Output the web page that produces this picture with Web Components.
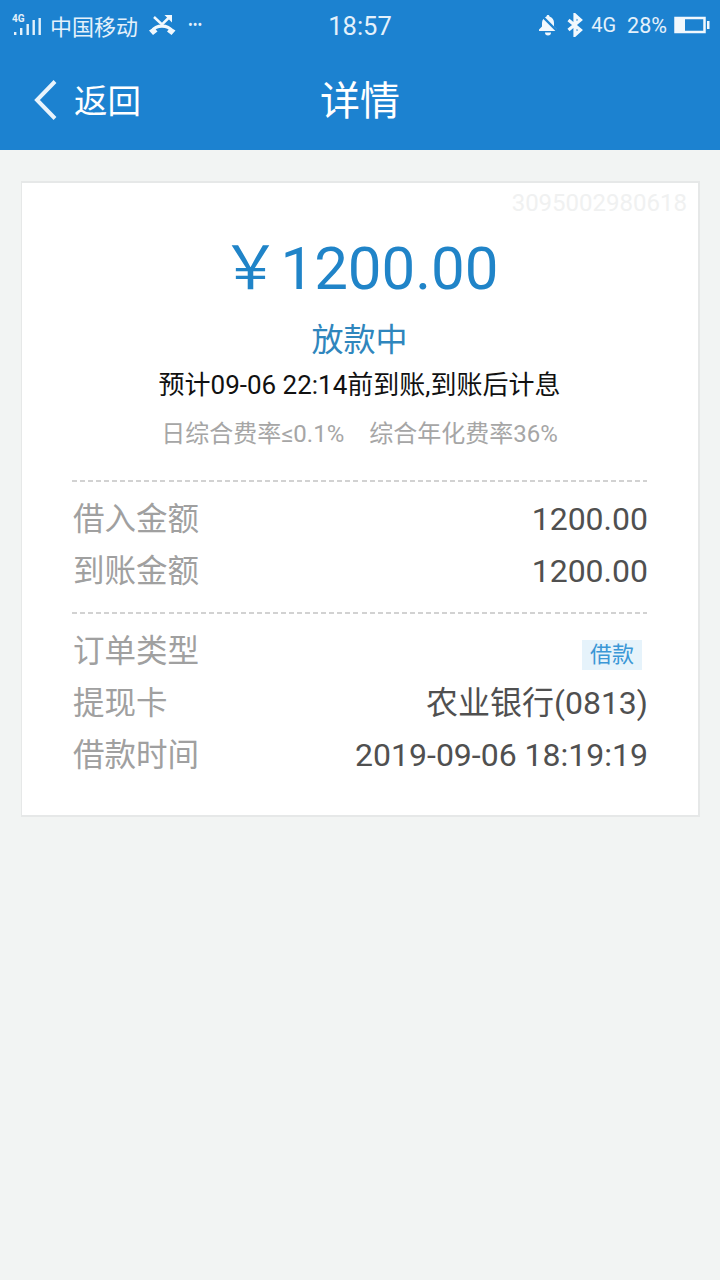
<!DOCTYPE html>
<html lang="zh">
<head>
<meta charset="utf-8">
<title>详情</title>
<style>
  html, body { margin: 0; height: 100%; background: #f2f4f3; }
  body { font-family: Roboto, "Noto Sans CJK SC", sans-serif; }
</style>
</head>
<body>
<app-header title="详情" back="返回"></app-header>
<detail-card serial="3095002980618">
  <amount-head slot="head" amount="1200.00" status="放款中"
    note="预计09-06 22:14前到账,到账后计息"
    fee-a="日综合费率≤0.1%" fee-b="综合年化费率36%"></amount-head>
  <info-row label="借入金额">1200.00</info-row>
  <info-row label="到账金额">1200.00</info-row>
  <dash-line></dash-line>
  <info-row label="订单类型" tag>借款</info-row>
  <info-row label="提现卡" cjk>农业银行(0813)</info-row>
  <info-row label="借款时间">2019-09-06 18:19:19</info-row>
</detail-card>

<script>
customElements.define("app-header", class extends HTMLElement {
  connectedCallback() {
    this.attachShadow({ mode: "open" }).innerHTML = `
      <style>
        :host { display: block; height: 150px; background: #1c82d0; color: #fff; }
        .status { height: 50px; display: flex; align-items: center; padding: 0 10px 0 12px;
          box-sizing: border-box; font-size: 22px; color: #e4f1fb; }
        .left, .right { display: flex; align-items: center; }
        .left { flex: 1; }
        .right { flex: 1; justify-content: flex-end; }
        .carrier { margin-left: 8px; }
        .call { margin-left: 10px; }
        .dots { margin-left: 12px; font-size: 14px; }
        .time { font-size: 25.500px; width: 120px; text-align: center; margin-left: -2px; margin-top: 2px; }
        .bell { margin-right: 9px; margin-left: -1px; }
        .net { margin-left: 8px; font-size: 20px; }
        .pct { margin-left: 11px; font-size: 21.500px; }
        .batt { margin-left: 7px; }
        nav { height: 100px; display: flex; align-items: center; position: relative; }
        .back { display: flex; align-items: center; padding-left: 33px; font-size: 33.500px; margin-top: -3px; }
        .back svg { margin: 3px 14px 0 0; }
        h1 { position: absolute; left: 0; right: 0; top: 2px; margin: 0; line-height: 100px;
          text-align: center; font-size: 40px; font-weight: 400; pointer-events: none; }
      </style>
      <div class="status">
        <div class="left">
          <svg width="30" height="22" viewBox="0 0 30 22" fill="#e4f1fb">
            <text x="0" y="8" font-size="10" font-weight="700" font-family="Roboto, sans-serif">4G</text>
            <rect x="2" y="18" width="2.400" height="3"/><rect x="8" y="14" width="2.400" height="7"/>
            <rect x="14.500" y="10" width="2.400" height="11"/><rect x="20.500" y="6" width="2.400" height="15"/>
            <rect x="26.500" y="4" width="2.400" height="17"/>
          </svg>
          <span class="carrier">中国移动</span>
          <svg class="call" width="28" height="22" viewBox="0 0 28 22" fill="none" stroke="#f1f8fd">
            <path d="M4 17C8 10.500 20 10.500 24 17" stroke-width="3.200"/>
            <path d="M1 16.500l5-3 3.500 4-4.500 3.500zM27.500 16.500l-5-3-3.500 4 4.500 3.500z" fill="#f1f8fd" stroke="none"/>
            <path d="M6 3l8 7.500 6.500-6.500" stroke-width="2.500"/>
            <path d="M16.500 1h7.500v7.500z" fill="#f1f8fd" stroke="none"/>
          </svg>
          <span class="dots">•••</span>
        </div>
        <span class="time">18:57</span>
        <div class="right">
          <svg class="bell" width="20" height="22" viewBox="0 0 20 22" fill="#f1f8fd">
            <path d="M10 1c1 0 1.500.7 1.500 1.500 3 .8 4.500 3.500 4.500 6.500v3.500l3 3v1.500H1V15.500l3-3V9c0-3 2-5.700 4.500-6.500C8.500 1.700 9 1 10 1z"/>
            <path d="M7 18.500h6a3 3 0 0 1-6 0z"/>
            <path d="M3 1l16 16" stroke="#1c82d0" stroke-width="2.400"/>
          </svg>
          <svg width="16" height="24" viewBox="0 0 16 24" fill="none" stroke="#f1f8fd" stroke-width="3.200">
            <path d="M1.500 7l12 10-5.500 5V2l5.500 5-12 10"/>
          </svg>
          <span class="net">4G</span>
          <span class="pct">28%</span>
          <svg class="batt" width="36" height="18" viewBox="0 0 36 18">
            <rect x="1.500" y="2" width="29" height="14" fill="none" stroke="#f1f8fd" stroke-width="2.500"/>
            <rect x="1" y="1.500" width="10" height="15" fill="#f1f8fd"/>
            <rect x="33" y="5" width="2.500" height="8" fill="#f1f8fd"/>
          </svg>
        </div>
      </div>
      <nav>
        <div class="back">
          <svg width="27" height="42" viewBox="0 0 27 42" fill="none" stroke="#e9f4fc" stroke-width="4">
            <path d="M22 2.500L4 21l18 18.500"/>
          </svg>
          <span>${this.getAttribute("back")}</span>
        </div>
        <h1>${this.getAttribute("title")}</h1>
      </nav>`;
  }
});

customElements.define("detail-card", class extends HTMLElement {
  connectedCallback() {
    this.attachShadow({ mode: "open" }).innerHTML = `
      <style>
        :host { display: block; box-sizing: border-box; width: 679px; height: 636px; margin: 31px 0 0 21px;
          background: #fff; border: 1px solid #e6e8e8; border-width: 2px 2px 2px 1px; position: relative; }
        .serial { position: absolute; top: 6px; right: 11px; font-size: 24px; line-height: 28px; color: #f0f1f1; }
        .body { padding: 8px 51px 0 50px; }
      </style>
      <div class="serial">${this.getAttribute("serial")}</div>
      <slot name="head"></slot>
      <div class="body"><slot></slot></div>`;
  }
});

customElements.define("amount-head", class extends HTMLElement {
  connectedCallback() {
    const a = n => this.getAttribute(n);
    this.attachShadow({ mode: "open" }).innerHTML = `
      <style>
        :host { display: block; text-align: center; padding: 50px 1px 0 0; }
        .amount { font-size: 60px; line-height: 72px; color: #2084c8; }
        .status { font-size: 32px; line-height: 46px; color: #2f86bd; margin-top: 12px; }
        .note { font-size: 26px; line-height: 36px; color: #111; margin-top: 4px; }
        .fees { font-size: 24px; line-height: 34px; color: #a6a6a6; margin-top: 14px; display: flex; justify-content: center; gap: 25px; }
        .line { margin: 29px 50px 0; height: 2px;
          background: repeating-linear-gradient(90deg, #d2d2d2 0 5px, transparent 5px 8.042px); }
      </style>
      <div class="amount">￥${a("amount")}</div>
      <div class="status">${a("status")}</div>
      <div class="note">${a("note")}</div>
      <div class="fees"><span>${a("fee-a")}</span><span>${a("fee-b")}</span></div>
      <div class="line"></div>`;
  }
});

customElements.define("dash-line", class extends HTMLElement {
  connectedCallback() {
    this.attachShadow({ mode: "open" }).innerHTML = `
      <style>:host { display: block; height: 2px; margin: 18px 0 8px;
        background: repeating-linear-gradient(90deg, #d2d2d2 0 5px, transparent 5px 8.042px); }</style>`;
  }
});

customElements.define("info-row", class extends HTMLElement {
  connectedCallback() {
    const tag = this.hasAttribute("tag");
    const cjk = this.hasAttribute("cjk");
    this.attachShadow({ mode: "open" }).innerHTML = `
      <style>
        :host { display: flex; justify-content: space-between; align-items: center; height: 52px; font-size: 31.500px; padding-left: 1px; }
        .label { color: #a0a0a0; }
        .value { color: #505050; font-size: 32px; margin: ${cjk ? 0 : 6}px -1px 0 0; }
        .tag { font-size: 22px; line-height: 30px; padding: 0 8px; color: #3b97d6; background: #e6f3fb; margin: 14px 5px 0 0; }
      </style>
      <span class="label">${this.getAttribute("label")}</span>
      <span class="${tag ? "tag" : "value"}"><slot></slot></span>`;
  }
});
</script>
</body>
</html>
